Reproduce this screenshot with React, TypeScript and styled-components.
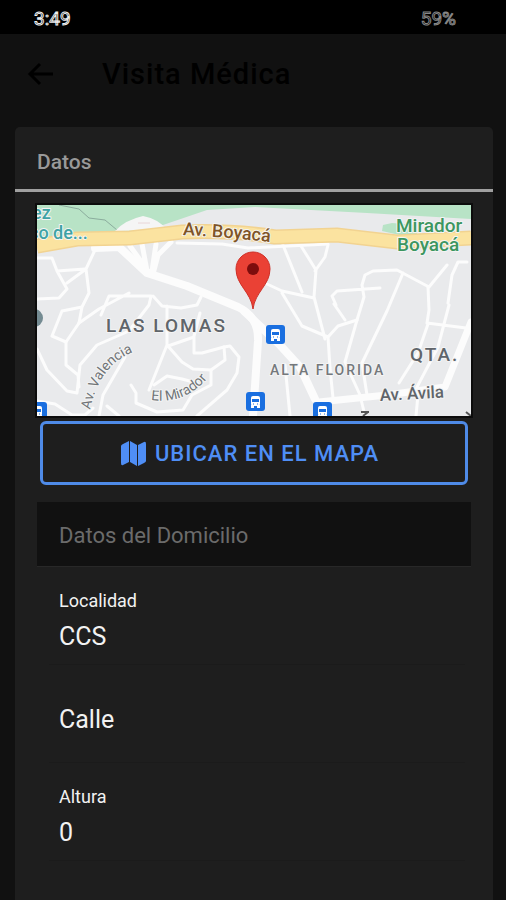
import React from "react";
import styled, { createGlobalStyle } from "styled-components";

const GlobalStyle = createGlobalStyle`
  * { box-sizing: border-box; }
  body {
    margin: 0;
    background: #111;
    color: #fff;
    font-family: Roboto, "Liberation Sans", sans-serif;
  }
`;

const Screen = styled.div`
  display: flex;
  flex-direction: column;
  height: 100vh;
  overflow: hidden;
`;

const StatusBar = styled.div`
  display: flex;
  flex: none;
  justify-content: space-between;
  padding: 8px 50px 0 34px;
  height: 34px;
  background: #000;
  font-size: 19px;
  line-height: 22px;
`;

const StatusText = styled.span<{ $tone: string }>`
  color: #000;
  -webkit-text-stroke: 1px ${(p) => p.$tone};
`;

const Toolbar = styled.header`
  display: flex;
  flex: none;
  align-items: center;
  gap: 46px;
  height: 80px;
  padding: 0 24px;
`;

const BackButton = styled.button`
  display: flex;
  padding: 0;
  border: 0;
  background: none;
  color: #000;
  cursor: pointer;
`;

const Title = styled.h1`
  margin: 0;
  color: #000;
  font-size: 29px;
  font-weight: 500;
  line-height: 36px;
  letter-spacing: 1px;
`;

const Card = styled.main`
  display: flex;
  flex: 1;
  flex-direction: column;
  margin: 13px 13px 0 15px;
  border-radius: 5px 5px 0 0;
  background: #1e1e1e;
`;

const CardHeader = styled.h2`
  margin: 0;
  padding: 20px 22px 12px;
  border-bottom: 3px solid #a0a0a0;
  color: #999;
  font-size: 21px;
  font-weight: 500;
  line-height: 30px;
`;

const CardBody = styled.div`
  display: flex;
  flex-direction: column;
  padding: 13px 22px 0;
`;

const MapSvg = styled.svg`
  display: block;
  width: 100%;
  height: auto;
  box-shadow: 0 0 0 2px #0c0c0c;
`;

const LocateButton = styled.button`
  display: flex;
  align-items: center;
  justify-content: center;
  gap: 9px;
  height: 64px;
  margin: 5px 3px 0;
  padding: 0 14px 0 6px;
  border: 3px solid #4f8be8;
  border-radius: 6px;
  background: none;
  color: #4f8ef5;
  font-family: inherit;
  font-size: 22px;
  font-weight: 500;
  letter-spacing: 1px;
  cursor: pointer;
`;

const SectionHeader = styled.h3`
  margin: 17px 0 0;
  padding: 18px 22px 14px;
  border-bottom: 1px solid #282828;
  background: #111;
  color: #6b6b6b;
  font-size: 22px;
  font-weight: 400;
  line-height: 32px;
`;

const Field = styled.div`
  display: grid;
  grid-template-columns: 1fr;
  align-content: start;
  align-items: center;
  height: 98px;
  margin: 0 6px 0 12px;
  padding: 20px 10px 7px;
  border-bottom: 1px solid #1b1b1b;
`;

const FieldLabel = styled.label<{ $large?: boolean }>`
  font-size: ${(p) => (p.$large ? "25px" : "18px")};
  line-height: 28px;
  color: #f2f2f2;
`;

const FieldInput = styled.input`
  width: 100%;
  height: 42px;
  padding: 0;
  border: 0;
  outline: 0;
  background: none;
  color: #f2f2f2;
  font-family: inherit;
  font-size: 25px;
`;

/* An empty field shows its label in the place of the value. */
const RestingField = styled(Field)`
  align-content: center;

  & > * {
    grid-area: 1 / 1;
  }
`;

const roads = [
  "M0 53H15L20 66L48 64M20 66L30 84L22 93L0 94M58 45L49 64L30 78M49 64L52 88L45 102M45 102L25 106L15 131L29 137L42 118L45 102",
  "M29 137V160L41 170L42 182M42 118L62 104L92 88M0 144L10 165L30 186L40 188L43 160L60 140L92 126L112 100L114 91L72 91L64 110",
  "M116 91L125 101L144 103L160 100L164 92M130 101V140M130 140L112 185M130 140L145 157L156 164L174 165L188 155L187 142L165 148L157 148V131L163 108M131 141L157 132",
  "M187 142L193 141L202 152L200 168L190 185L160 211M174 165V180L155 190L146 205L120 207L99 198V188L94 180M117 180L130 171L145 174L160 178",
  "M0 196L18 199L35 210H48L56 203M88 152L66 190L62 211M70 201L82 211",
  "M246 40L265 87M264 41L279 65L277 92L288 134M291 40L288 52L278 66M230 79L245 86L277 93M245 88L265 121L291 132L301 121L320 115L327 92L325 80L328 70L336 66L360 65L392 82L410 60M299 100L295 91L300 86L343 83M297 99L308 115M366 68L350 106L325 158L330 190",
  "M391 82L392 105L390 118L429 123M391 119L381 148L362 178M412 100L401 142L380 182M411 98L415 70L421 57L430 57M291 132L293 163L296 193M320 115L308 157L323 190L328 211M248 160L253 211M381 190L379 211",
];

const BusStop = ({ x, y }: { x: number; y: number }) => (
  <g transform={`translate(${x} ${y})`}>
    <rect width="19" height="19" rx="3" fill="#1a6fe0" />
    <rect x="5" y="4" width="9" height="10" rx="2" fill="#fff" />
    <path d="M6 7H13V10H6Z" fill="#1a6fe0" />
    <path d="M5 13V16H8V13M11 13V16H14V13" fill="#fff" />
    <path d="M7 12h1M11 12h1" stroke="#1a6fe0" />
  </g>
);

const avenue = "M0 41L40 34L93 33L145 27Q195 25 238 32L300 30L360 37L434 33";

const StreetMap = () => (
  <MapSvg viewBox="0 0 434 211" role="img" aria-label="Mapa del domicilio">
    <defs>
      <path id="boyaca" d="M146 30Q190 32 240 38" />
      <path id="valencia" d="M53 205Q62 162 94 148" />
      <path id="mirador" d="M114 195Q150 200 173 170" />
    </defs>
    <rect width="434" height="211" fill="#e9eaec" />
    <path d="M0 0H434V14L330 8L218 2L170 5L126 20L80 30L0 38Z" fill="#b8e3c6" />
    <path d="M22 0L42 4L52 13L68 15L80 25" fill="none" stroke="#8bac9d" strokeWidth="1" />
    <path d="M346 20L355 18L380 20V34L345 26Z" fill="#b8e3c6" />
    <path d="M78 26Q88 15 106 11Q122 14 130 25Z" fill="#f5f5f5" />
    <path d="M101 18H113" stroke="#e9d6d8" />
    <g fill="none" stroke="#fcfcfc" strokeLinejoin="round" strokeLinecap="round">
      {roads.map((d) => (
        <path key={d} d={d} strokeWidth="3" />
      ))}
      <path d="M93 41L111 66M105 39L110 66M119 39L115 66M134 37L121 50L116 69" strokeWidth="5" />
      <path d="M58 43L82 42L110 68L150 81L201 102Q222 112 221 136L216 211" strokeWidth="8" />
      <path d="M207 106L242 139L263 162L278 194" strokeWidth="8" />
      <path d="M282 197L350 190L408 182L434 117" strokeWidth="7" />
      <path d="M140 38L185 39L211 43L291 39" strokeWidth="3" />
    </g>
    <path d={avenue} fill="none" stroke="#f2d391" strokeWidth="15" />
    <path d={avenue} fill="none" stroke="#fbe3a0" strokeWidth="12" />
    <circle cx="-3" cy="113" r="9" fill="#748b92" />
    <BusStop x={229} y={120} />
    <BusStop x={209} y={187} />
    <BusStop x={276} y={197} />
    <BusStop x={-9} y={197} />
    <path d="M324 207H332M326 211L331 207M429 207L434 211" fill="none" stroke="#555" strokeWidth="2" />
    <g stroke="#f4f4f4" strokeWidth="2" strokeLinejoin="round" paintOrder="stroke" fontWeight="500">
      <g fill="#3fa3a5" fontSize="18">
        <text x="-5" y="14">ez</text>
        <text x="-8" y="34">co de...</text>
      </g>
      <g fill="#3c9660" fontSize="19">
        <text x="359" y="27">Mirador</text>
        <text x="360" y="46">Boyacá</text>
      </g>
      <text fill="#805426" fontSize="18">
        <textPath href="#boyaca">Av. Boyacá</textPath>
      </text>
      <g fill="#60656a">
        <text x="69" y="127" fontSize="19" letterSpacing="2">LAS LOMAS</text>
        <text x="233" y="170" fontSize="14" letterSpacing="2" fill="#74787c">ALTA FLORIDA</text>
        <text x="373" y="156" fontSize="19" letterSpacing="2">QTA.</text>
        <text x="343" y="196" fontSize="17" transform="rotate(-3 343 196)">Av. Ávila</text>
      </g>
      <g fill="#707478" fontSize="14" fontWeight="400">
        <text><textPath href="#valencia">Av. Valencia</textPath></text>
        <text><textPath href="#mirador">El Mirador</textPath></text>
      </g>
    </g>
    <path d="M216 104C214 87 199 80 199 64A17 17 0 0 1 233 64C233 80 218 87 216 104Z" fill="#ea4135" stroke="#ce3027" />
    <circle cx="216" cy="64" r="6" fill="#7d0d0d" />
  </MapSvg>
);

const App = () => (
  <>
    <GlobalStyle />
    <Screen>
      <StatusBar>
        <StatusText $tone="#eee">3:49</StatusText>
        <StatusText $tone="#888">59%</StatusText>
      </StatusBar>
      <Toolbar>
        <BackButton aria-label="Volver">
          <svg width="32" height="32" viewBox="0 0 32 32" fill="none" stroke="currentColor" strokeWidth="3">
            <path d="M29 16H6M16 6L6 16L16 26" />
          </svg>
        </BackButton>
        <Title>Visita Médica</Title>
      </Toolbar>
      <Card>
        <CardHeader>Datos</CardHeader>
        <CardBody>
          <StreetMap />
          <LocateButton>
            <svg width="25" height="25" viewBox="0 0 25 25" fill="currentColor" aria-hidden="true">
              <path d="M0 5Q0 4 2 3L8 0V21L2 24Q0 25 0 22ZM9 0L16 4V25L9 21ZM17 4L23 1Q25 0 25 3V20Q25 21 23 22L17 25Z" />
            </svg>
            UBICAR EN EL MAPA
          </LocateButton>
          <SectionHeader>Datos del Domicilio</SectionHeader>
          <Field>
            <FieldLabel htmlFor="localidad">Localidad</FieldLabel>
            <FieldInput id="localidad" defaultValue="CCS" />
          </Field>
          <RestingField>
            <FieldLabel htmlFor="calle" $large>Calle</FieldLabel>
            <FieldInput id="calle" />
          </RestingField>
          <Field>
            <FieldLabel htmlFor="altura">Altura</FieldLabel>
            <FieldInput id="altura" defaultValue="0" />
          </Field>
        </CardBody>
      </Card>
    </Screen>
  </>
);

export default App;
